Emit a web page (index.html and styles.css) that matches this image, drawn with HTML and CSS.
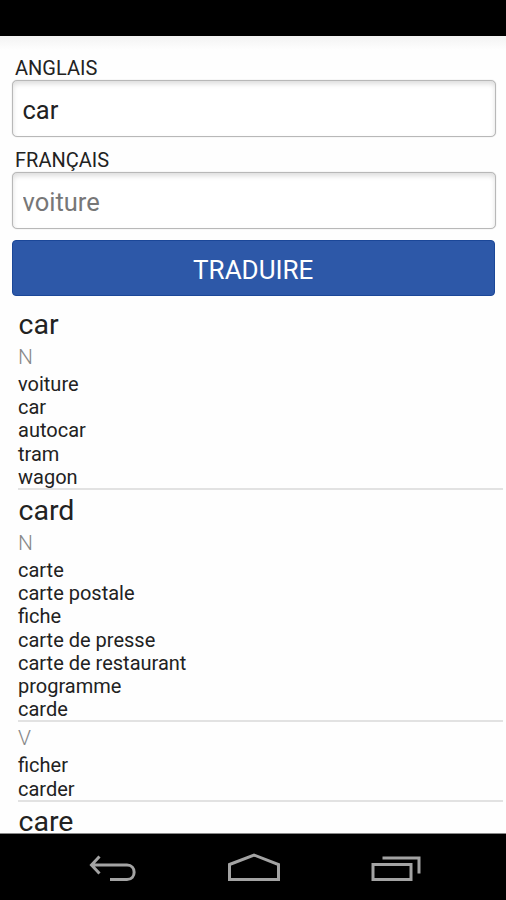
FILE: index.html
```html
<!DOCTYPE html>
<html lang="fr">
<head>
  <meta charset="UTF-8" />
  <meta name="viewport" content="width=device-width, initial-scale=1" />
  <title>Dictionnaire anglais - français</title>
  <link rel="stylesheet" href="styles.css">
</head>
<body>
  <div class="status-bar"></div>

  <main class="content">
    <form class="search">
      <label for="source">ANGLAIS</label>
      <input type="text" id="source" value="car" />
      <label for="target">FRANÇAIS</label>
      <input type="text" id="target" placeholder="voiture" />
      <button type="button">TRADUIRE</button>
    </form>

    <div class="results">
      <h2>car</h2>
      <div class="sense">
        <h3>N</h3>
        <ul>
          <li>voiture</li>
          <li>car</li>
          <li>autocar</li>
          <li>tram</li>
          <li>wagon</li>
        </ul>
      </div>

      <h2>card</h2>
      <div class="sense">
        <h3>N</h3>
        <ul>
          <li>carte</li>
          <li>carte postale</li>
          <li>fiche</li>
          <li>carte de presse</li>
          <li>carte de restaurant</li>
          <li>programme</li>
          <li>carde</li>
        </ul>
      </div>
      <div class="sense">
        <h3>V</h3>
        <ul>
          <li>ficher</li>
          <li>carder</li>
        </ul>
      </div>

      <h2 class="last">care</h2>
    </div>
  </main>

  <nav class="nav-bar">
    <svg class="icon" width="48" height="30" viewBox="0 0 48 30">
      <path d="M11.5 3.5 L3.5 12 L11.5 20.5 M3.5 12 H39 C48.500 12 48.500 26.500 39 26.500 H22" />
    </svg>
    <svg class="icon" width="54" height="30" viewBox="0 0 54 30">
      <path d="M2.500 11.500 L27 2 L51.500 11.500 V26.500 H2.500 Z" />
    </svg>
    <svg class="icon" width="50" height="30" viewBox="0 0 50 30">
      <path d="M2 11.500 H40 V26.500 H2 Z M11.500 5 H48 V20.500" />
    </svg>
  </nav>
</body>
</html>
```
FILE: styles.css
```css
* {
  box-sizing: border-box;
}
body {
  font-family: Roboto, "Liberation Sans", sans-serif;
  background: #fefefe;
  color: #222;
  margin: 0;
  height: 900px;
  display: flex;
  flex-direction: column;
  overflow: hidden;
}
.status-bar {
  height: 36px;
  flex: none;
  background: #000;
}
.content {
  flex: 1;
  min-height: 0;
  overflow: hidden;
  background: linear-gradient(#f3f3f3, #fefefe 14px);
  border-bottom: 1px solid #888;
}
.search {
  padding: 19px 10px 0 11.5px;
  display: flex;
  flex-direction: column;
}
label {
  height: 25px;
  padding-left: 3.5px;
  font-size: 20px;
  line-height: 27px;
}
input {
  width: 484.5px;
  height: 57px;
  margin: 0 0 10px;
  padding: 3px 10px 0;
  border: 1px solid #b8b8b8;
  border-radius: 5px;
  background: #fff;
  box-shadow: inset 0 3px 5px #dedede, 0 0 1px #bbb;
  color: #222;
  font-family: inherit;
  font-size: 25.5px;
}
input::placeholder {
  color: #777;
}
button {
  width: 483.5px;
  height: 56px;
  margin-top: 1px;
  padding: 3px 0 0;
  border: 1px solid #1b4798;
  border-radius: 4px;
  background: #2d58a8;
  color: #fff;
  font-family: inherit;
  font-size: 26px;
}
.results {
  padding: 8px 3px 0 18px;
}
h2 {
  margin: 0;
  padding: 4px 0 0 0.5px;
  font-size: 28.5px;
  font-weight: 400;
  line-height: 33px;
}
h2.last {
  padding-top: 3px;
}
h3 {
  margin: 0;
  padding-top: 4px;
  color: #888;
  font-size: 21px;
  font-weight: 300;
  line-height: 24px;
}
.sense {
  border-bottom: 2px solid #e2e2e2;
}
ul {
  list-style: none;
  margin: 0 0 -1px;
  padding: 4px 0 0;
}
li {
  font-size: 20px;
  line-height: 23.2px;
}
.nav-bar {
  height: 66px;
  flex: none;
  padding: 2px 85px 0 88px;
  display: flex;
  align-items: center;
  justify-content: space-between;
  background: #000;
}
.icon {
  fill: none;
  stroke: #a3a3a3;
  stroke-width: 3;
}
```
